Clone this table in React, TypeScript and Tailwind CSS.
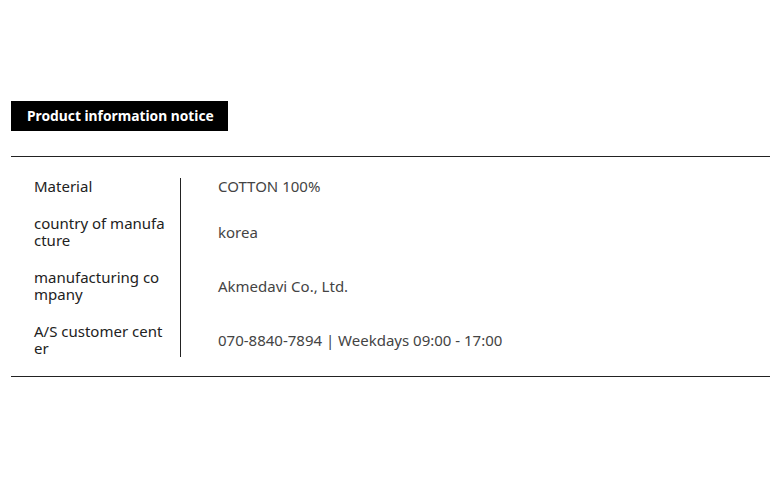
import React from 'react';

const rows = [
  { label: 'Material', value: 'COTTON 100%' },
  { label: 'country of manufacture', value: 'korea' },
  { label: 'manufacturing company', value: 'Akmedavi Co., Ltd.' },
  { label: 'A/S customer center', value: '070-8840-7894 | Weekdays 09:00 - 17:00' },
];

export default function App() {
  return (
    <div
      className="min-h-[491px] bg-white pl-[11px] pr-[13px] pt-[101px]"
      style={{ fontFamily: '"Noto Sans", sans-serif' }}
    >
      <div className="flex h-[30px] w-[217px] items-center bg-black pl-4 text-[13.8px] font-bold text-white">
        Product information notice
      </div>

      <div className="mt-[25px] border-y border-[#222] pt-[21px] pb-[19px]">
        {rows.map((row, i) => (
          <div key={row.label} className="flex">
            <div
              className={`w-[170px] shrink-0 border-r border-[#222] pl-[23px] pr-[14px] ${
                i < rows.length - 1 ? 'pb-5' : ''
              }`}
            >
              <p className="break-all text-[15px] leading-[17px] text-[#222]">{row.label}</p>
            </div>
            <div
              className={`flex items-center pl-[37px] text-[15px] leading-[17px] text-[#444] ${
                i < rows.length - 1 ? 'pb-5' : ''
              }`}
            >
              {row.value}
            </div>
          </div>
        ))}
      </div>
    </div>
  );
}
